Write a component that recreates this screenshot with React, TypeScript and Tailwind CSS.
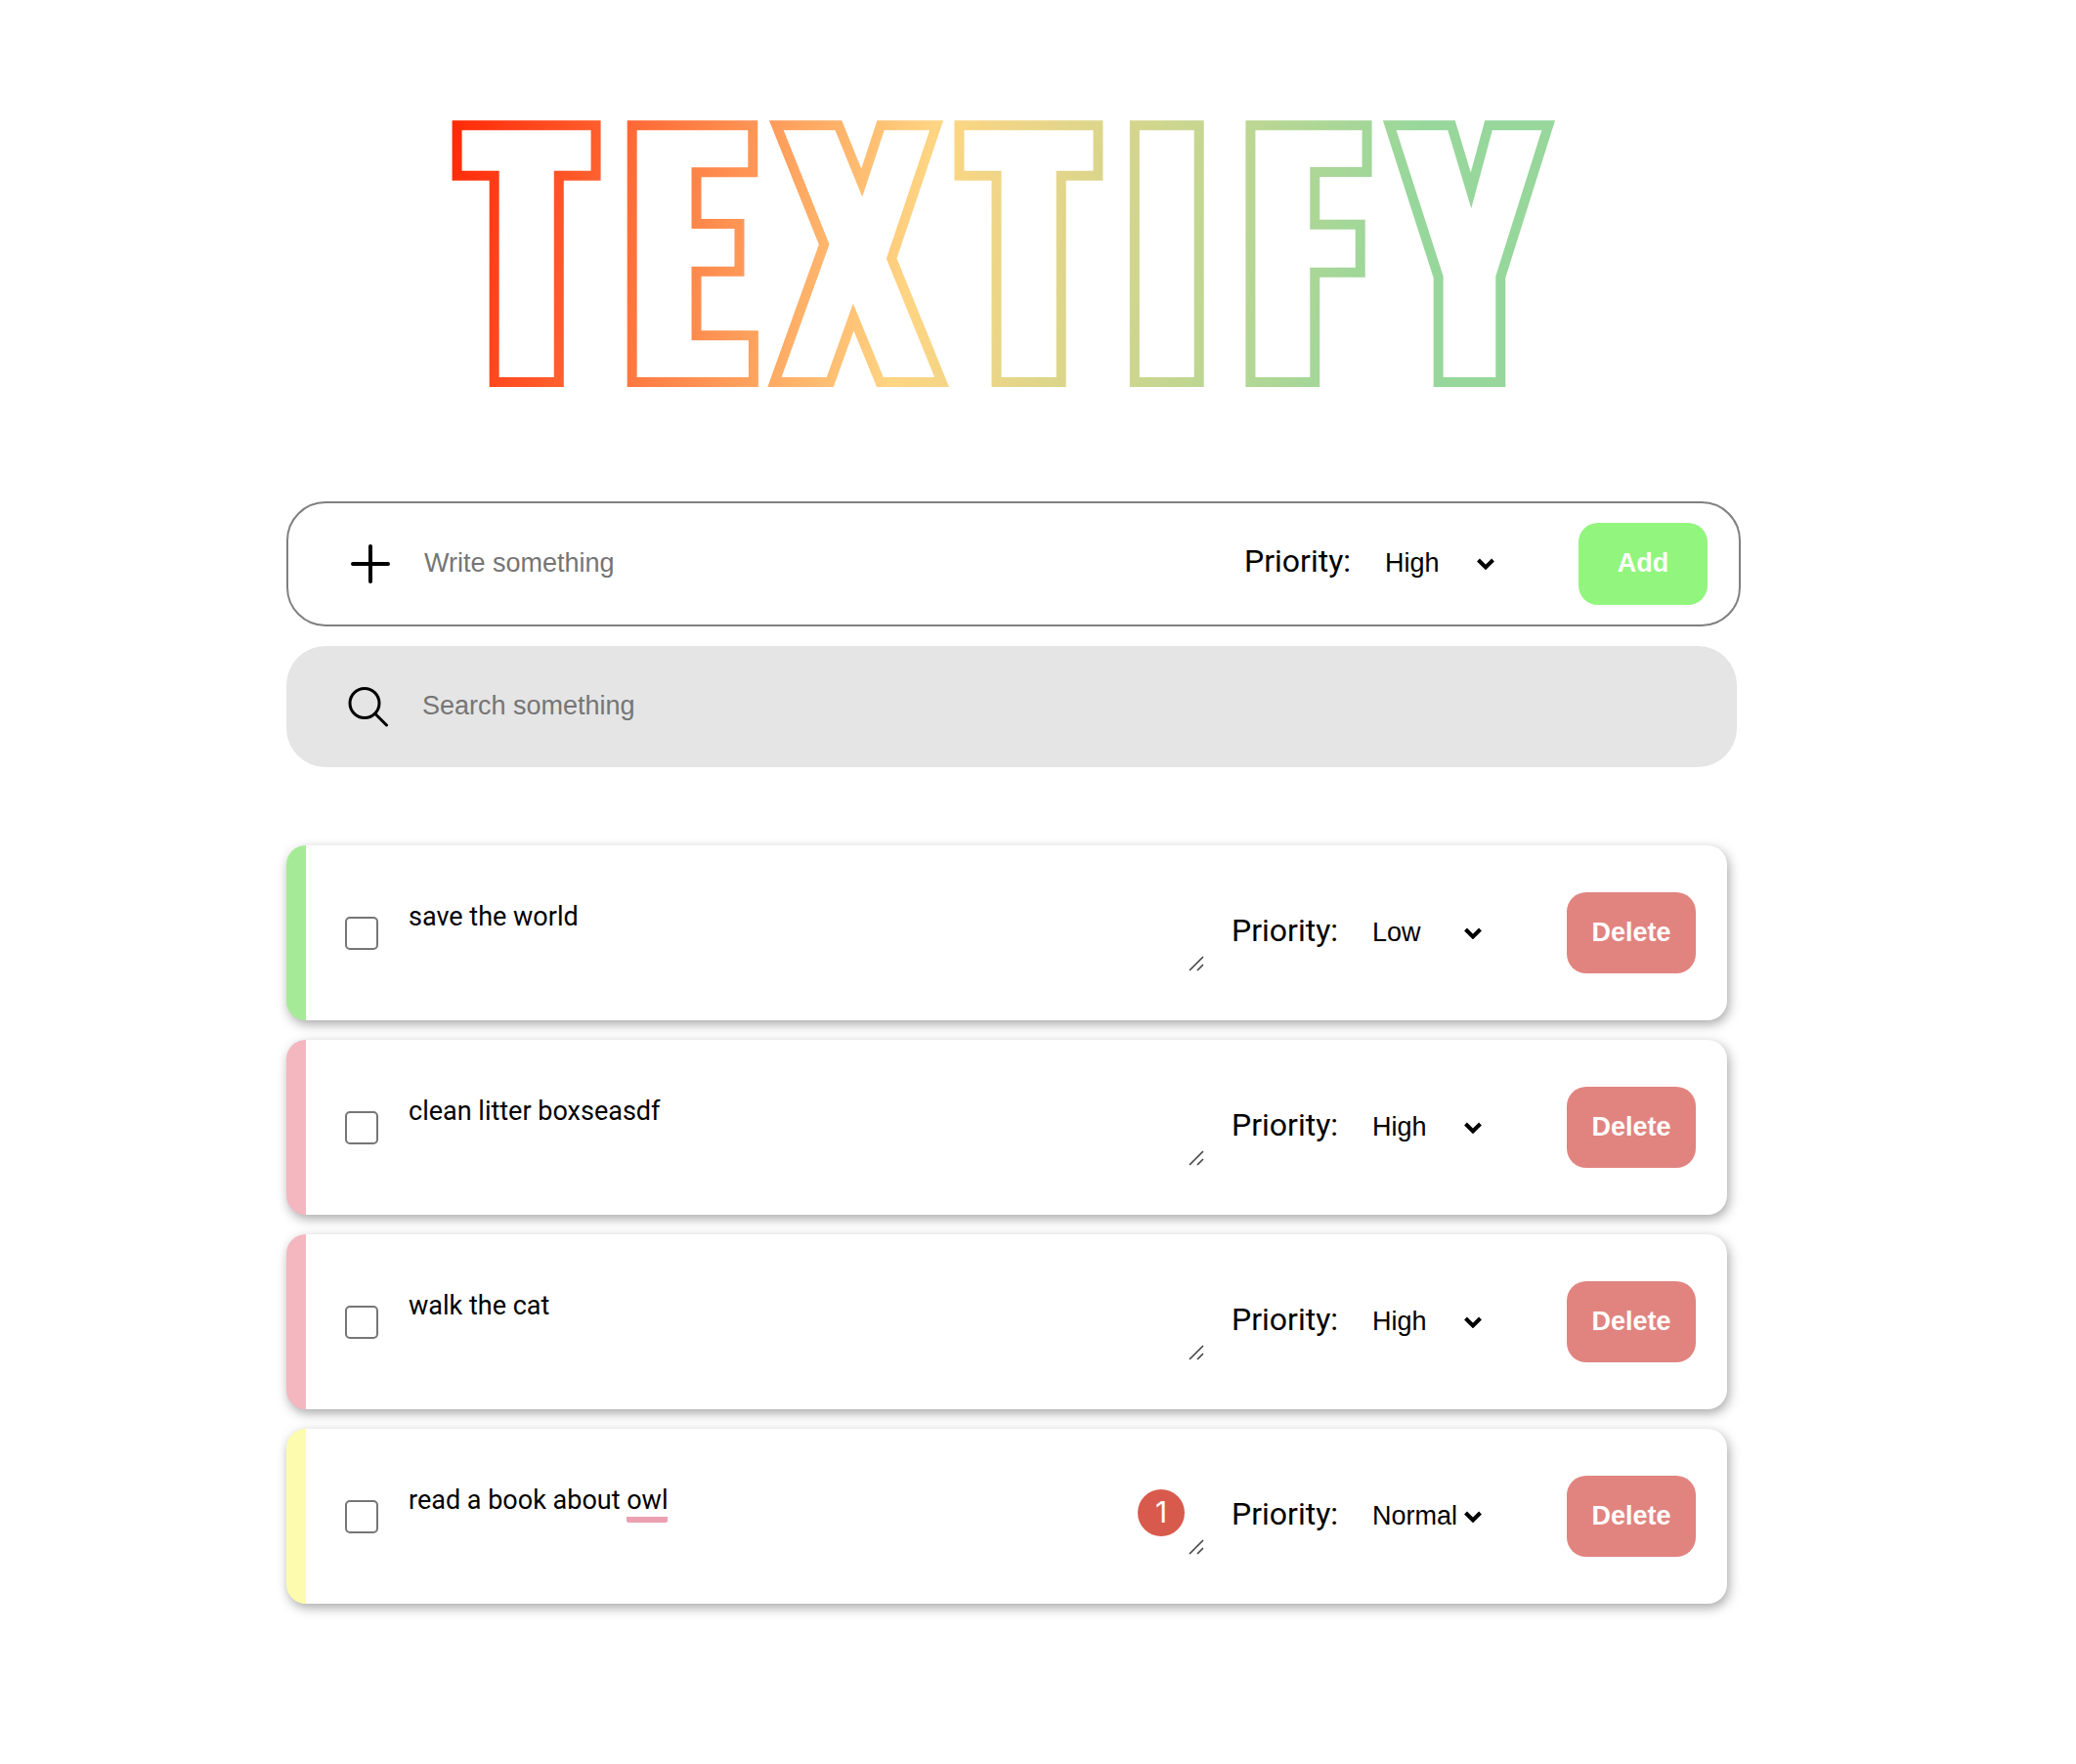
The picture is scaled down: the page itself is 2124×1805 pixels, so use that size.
import { useState } from "react";

type Level = "Low" | "Normal" | "High";

interface Task {
  id: number;
  text: string;
  flagged?: string;
  priority: Level;
  issues?: number;
}

const initialTasks: Task[] = [
  { id: 1, text: "save the world", priority: "Low" },
  { id: 2, text: "clean litter boxseasdf", priority: "High" },
  { id: 3, text: "walk the cat", priority: "High" },
  { id: 4, text: "read a book about owl", flagged: "owl", priority: "Normal", issues: 1 },
];

const stripe: Record<Level, string> = {
  Low: "border-l-[#a5eb97]",
  Normal: "border-l-[#fdfcae]",
  High: "border-l-[#f4b6bf]",
};

function PrioritySelect({ id, value, onChange }: { id: string; value: Level; onChange: (v: Level) => void }) {
  return (
    <div className="flex shrink-0 items-center">
      <label htmlFor={id} className="mb-1.5 w-36 text-[32px] leading-10">
        Priority:
      </label>
      <div className="relative flex items-center">
        <select
          id={id}
          value={value}
          onChange={(e) => onChange(e.target.value as Level)}
          className="w-28 appearance-none bg-transparent pb-0.5 font-[Liberation_Sans,Arial,sans-serif] text-[27px] leading-9 outline-none"
        >
          <option>Low</option>
          <option>Normal</option>
          <option>High</option>
        </select>
        <svg viewBox="0 0 18 12" className="pointer-events-none absolute right-0 h-3 w-[18px]" aria-hidden="true">
          <path d="M1.5 2 L9 9.5 L16.5 2" fill="none" stroke="#000" strokeWidth="4" />
        </svg>
      </div>
    </div>
  );
}

function TaskCard({ task, onPriority, onDelete }: { task: Task; onPriority: (v: Level) => void; onDelete: () => void }) {
  const lead = task.flagged ? task.text.slice(0, task.text.length - task.flagged.length) : "";
  return (
    <li
      className={`mr-[14px] flex h-[179px] items-center rounded-[20px] border-l-[20px] bg-white pr-8 pl-10 shadow-[2px_4px_12px_rgba(0,0,0,0.35)] ${stripe[task.priority]}`}
    >
      <input
        type="checkbox"
        aria-label={`Done: ${task.text}`}
        className="size-[34px] shrink-0 appearance-none rounded-[5px] border-2 border-[#767676] bg-white"
      />
      <div className="relative mb-1 ml-[27px] h-[84px] min-w-0 flex-1">
        <textarea
          aria-label="Task text"
          defaultValue={task.text}
          spellCheck={false}
          className="block h-full w-full resize-none overflow-hidden bg-transparent p-1 text-[27px] leading-[46px] outline-none"
        />
        {task.flagged && (
          <div aria-hidden="true" className="pointer-events-none absolute top-0 left-1 flex pt-1 text-[27px] leading-[46px] text-transparent select-none">
            <span className="whitespace-pre">{lead}</span>
            <span className="h-[46px] rounded-xs border-b-6 border-[#eaa0b0]">{task.flagged}</span>
          </div>
        )}
        {task.issues && (
          <span className="absolute right-5 bottom-5 flex size-12 items-center justify-center rounded-full bg-[#d85a4c] font-[Inter,sans-serif] text-[30px] text-white">
            {task.issues}
          </span>
        )}
        <svg viewBox="0 0 16 18" className="pointer-events-none absolute right-0 bottom-0 h-[18px] w-4" aria-hidden="true">
          <path d="M1 16 L15 2 M9 16 L15 10" fill="none" stroke="#444" strokeWidth="1.6" />
        </svg>
      </div>
      <div className="ml-7 flex shrink-0 items-center">
        <PrioritySelect id={`priority-${task.id}`} value={task.priority} onChange={onPriority} />
        <button
          onClick={onDelete}
          className="ml-[87px] h-[83px] w-[132px] rounded-[20px] bg-[#e18480] font-[Liberation_Sans,Arial,sans-serif] text-[27px] font-bold text-white"
        >
          Delete
        </button>
      </div>
    </li>
  );
}

export default function App() {
  const [tasks, setTasks] = useState(initialTasks);
  const [level, setLevel] = useState<Level>("High");

  return (
    <main className="mr-[343px] ml-[293px] bg-white pb-40 font-[Roboto,sans-serif] text-black">
      <header className="flex h-[513px] items-start justify-center pt-[34px]">
        <h1 className="bg-linear-[100deg,#ff1f00_0%,#ffd583_42%,#97d79b_82%] bg-clip-text px-5 font-[Oswald,Impact,sans-serif] text-[312px] leading-[422px] font-bold tracking-[0.08em] text-white [-webkit-text-stroke:20px_transparent]">
          TEXTIFY
        </h1>
      </header>

      <form
        onSubmit={(e) => e.preventDefault()}
        className="flex h-32 items-center rounded-[40px] border-2 border-[#808080] pr-8 pl-[63px]"
      >
        <svg viewBox="0 0 42 42" className="size-[42px] shrink-0" aria-hidden="true">
          <path d="M21 3 V39 M3 21 H39" fill="none" stroke="#000" strokeWidth="4" strokeLinecap="round" />
        </svg>
        <input
          type="text"
          aria-label="New task"
          placeholder="Write something"
          className="ml-[34px] min-w-0 flex-1 bg-transparent pb-0.5 font-[Liberation_Sans,Arial,sans-serif] text-[27px] outline-none placeholder:text-[#757575]"
        />
        <PrioritySelect id="priority-new" value={level} onChange={setLevel} />
        <button
          type="submit"
          className="ml-[86px] h-[84px] w-[132px] rounded-[20px] bg-[#92f57e] pb-0.5 font-[Liberation_Sans,Arial,sans-serif] text-[27px] font-bold text-white"
        >
          Add
        </button>
      </form>

      <div className="mt-5 mr-1 flex h-[124px] items-center rounded-[40px] bg-[#e5e5e5] pl-[63px]">
        <svg viewBox="0 0 42 42" className="size-[42px] shrink-0" aria-hidden="true">
          <path d="M28 28.5 L39.5 40 M32 17.5 A15 15 0 1 1 2 17.5 A15 15 0 1 1 32 17.5" fill="none" stroke="#000" strokeWidth="3" strokeLinecap="round" />
        </svg>
        <input
          type="search"
          aria-label="Search tasks"
          placeholder="Search something"
          className="ml-[34px] min-w-0 flex-1 bg-transparent pb-0.5 font-[Liberation_Sans,Arial,sans-serif] text-[27px] outline-none placeholder:text-[#757575]"
        />
      </div>

      <ul className="mt-20 flex flex-col gap-5">
        {tasks.map((task) => (
          <TaskCard
            key={task.id}
            task={task}
            onPriority={(priority) => setTasks(tasks.map((t) => (t.id === task.id ? { ...t, priority } : t)))}
            onDelete={() => setTasks(tasks.filter((t) => t.id !== task.id))}
          />
        ))}
      </ul>
    </main>
  );
}
